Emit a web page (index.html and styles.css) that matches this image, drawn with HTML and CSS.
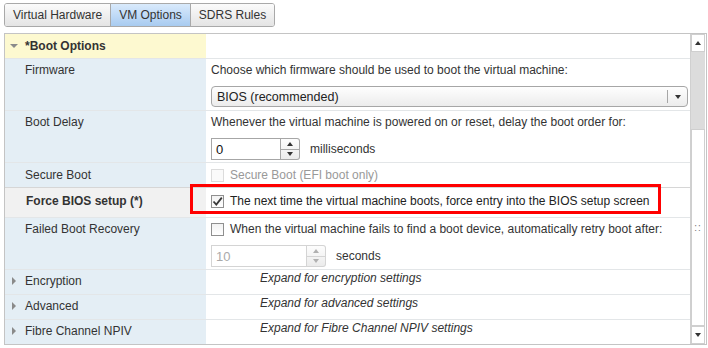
FILE: index.html
```html
<!DOCTYPE html>
<html lang="en">
<head>
<meta charset="UTF-8">
<title>VM Options</title>
<link rel="stylesheet" href="styles.css">
</head>
<body>
    <div class="tabs">
        <span class="tab">Virtual Hardware</span>
        <span class="tab active">VM Options</span>
        <span class="tab">SDRS Rules</span>
    </div>

    <div class="panel">
        <div class="rows">
            <div class="row head">
                <div class="label"><span class="arrow down"></span>*Boot Options</div>
                <div class="value"></div>
            </div>

            <div class="row tall">
                <div class="label">Firmware</div>
                <div class="value">
                    <div>Choose which firmware should be used to boot the virtual machine:</div>
                    <div class="select">
                        <span>BIOS (recommended)</span>
                        <span class="select-btn"><span class="tri-down"></span></span>
                    </div>
                </div>
            </div>

            <div class="row tall">
                <div class="label">Boot Delay</div>
                <div class="value">
                    <div>Whenever the virtual machine is powered on or reset, delay the boot order for:</div>
                    <div class="line">
                        <div class="spinner">
                            <span class="spin-input">0</span>
                            <span class="spin-btns">
                                <span class="spin-btn"><span class="tri-up"></span></span>
                                <span class="spin-btn"><span class="tri-down"></span></span>
                            </span>
                        </div>
                        <span class="unit">milliseconds</span>
                    </div>
                </div>
            </div>

            <div class="row before-force">
                <div class="label">Secure Boot</div>
                <div class="value muted">
                    <div class="line"><span class="check disabled"></span>Secure Boot (EFI boot only)</div>
                </div>
            </div>

            <div class="row force">
                <div class="label">Force BIOS setup (*)</div>
                <div class="value dark">
                    <div class="line">
                        <span class="check">
                            <svg width="11" height="11" viewBox="0 0 11 11"><path d="M1.5 5.5 L4.3 8.6 L9.8 1.6" fill="none" stroke="#3a3a3a" stroke-width="1.8"/></svg>
                        </span>The next time the virtual machine boots, force entry into the BIOS setup screen
                    </div>
                </div>
                <div class="highlight"></div>
            </div>

            <div class="row tall">
                <div class="label">Failed Boot Recovery</div>
                <div class="value">
                    <div class="line"><span class="check"></span>When the virtual machine fails to find a boot device, automatically retry boot after:</div>
                    <div class="line">
                        <div class="spinner off">
                            <span class="spin-input wide">10</span>
                            <span class="spin-btns">
                                <span class="spin-btn"><span class="tri-up"></span></span>
                                <span class="spin-btn"><span class="tri-down"></span></span>
                            </span>
                        </div>
                        <span class="unit">seconds</span>
                    </div>
                </div>
            </div>

            <div class="row sub">
                <div class="label"><span class="arrow right"></span>Encryption</div>
                <div class="value hint">Expand for encryption settings</div>
            </div>
            <div class="row sub">
                <div class="label"><span class="arrow right"></span>Advanced</div>
                <div class="value hint">Expand for advanced settings</div>
            </div>
            <div class="row sub last">
                <div class="label"><span class="arrow right"></span>Fibre Channel NPIV</div>
                <div class="value hint">Expand for Fibre Channel NPIV settings</div>
            </div>
        </div>

        <div class="scrollbar">
            <span class="sb-btn"><span class="tri-up"></span></span>
            <span class="sb-track"></span>
            <span class="sb-thumb"><span class="grip">::</span></span>
            <span class="sb-btn"><span class="tri-down"></span></span>
        </div>
    </div>
</body>
</html>
```

FILE: styles.css
```css
body {
    margin: 0;
    padding: 3px 1px 0 4px;
    font-family: "Liberation Sans", Arial, sans-serif;
    font-size: 12px;
    color: #333;
}

/* tab strip */
.tabs {
    display: inline-flex;
    border: 1px solid #a9a9a9;
    border-radius: 3px;
    overflow: hidden;
}

.tab {
    height: 22px;
    line-height: 22px;
    padding: 0 8px 0 8px;
    background: linear-gradient(#fbfbfb, #e4e4e4);
    border-left: 1px solid #a9a9a9;
    color: #333;
}

.tab:first-child {
    border-left: none;
}

.tab.active {
    background: linear-gradient(#d9eafc, #a8cbf0);
}

/* main panel */
.panel {
    display: flex;
    margin-top: 6px;
    height: 310px;
    border: 1px solid #c4c4c4;
}

.rows {
    flex: 1;
    overflow: hidden;
}

.row {
    position: relative;
    display: grid;
    grid-template-columns: 201px 1fr;
    border-bottom: 1px solid #e3e6e8;
    min-height: 24px;
}

.row.last {
    border-bottom: none;
}

.label {
    background: #e4eef5;
    padding: 4px 0 0 20px;
    line-height: 16px;
}

.value {
    padding: 4px 5px 2px;
    line-height: 16px;
    display: flex;
    flex-direction: column;
    gap: 9px;
}

.row.tall {
    height: 51px;
}

.row.tall .value {
    padding-top: 3px;
    gap: 8px;
}

.row.tall .label {
    padding-top: 3px;
}

.head .label {
    background: #fdf9d0;
    font-weight: bold;
}

.before-force {
    border-bottom-color: #d6d6d6;
}

.force {
    min-height: 29px;
}

.force .label {
    background: #f1f1f1;
    font-weight: bold;
    padding: 5px 0 0 21px;
}

.force .value {
    padding-top: 5px;
}

.highlight {
    position: absolute;
    left: 185px;
    top: -4px;
    width: 465px;
    height: 24px;
    border: 3px solid #f00;
}

.line {
    display: flex;
    align-items: center;
}

.muted {
    color: #999;
}

.dark {
    color: #222;
}

.hint {
    font-style: italic;
    padding: 0 0 0 54px;
}

.sub .label {
    padding-top: 3px;
}

/* expand arrows */
.arrow {
    display: inline-block;
    width: 0;
    height: 0;
    vertical-align: middle;
}

.arrow.down {
    border-left: 4px solid transparent;
    border-right: 4px solid transparent;
    border-top: 4px solid #8a8a8a;
    margin: 0 7px 2px -15px;
}

.arrow.right {
    border-top: 4px solid transparent;
    border-bottom: 4px solid transparent;
    border-left: 4px solid #8a8a8a;
    margin: 0 9px 2px -13px;
}

/* dropdown */
.select {
    display: flex;
    align-items: center;
    justify-content: space-between;
    height: 19px;
    width: 470px;
    border: 1px solid #a6a6a6;
    border-radius: 4px;
    background: linear-gradient(#fefefe, #ececec);
    color: #222;
    padding-left: 5px;
    font-size: 12.5px;
}

.select-btn {
    display: flex;
    align-items: center;
    justify-content: center;
    width: 19px;
    height: 13px;
    border-left: 1px solid #a6a6a6;
}

.tri-down, .tri-up {
    display: inline-block;
    width: 0;
    height: 0;
    border-left: 3px solid transparent;
    border-right: 3px solid transparent;
}

.tri-down {
    border-top: 4px solid #333;
}

.tri-up {
    border-bottom: 4px solid #333;
}

/* number spinner */
.spinner {
    display: flex;
    height: 22px;
}

.spin-input {
    width: 64px;
    border: 1px solid #a6a6a6;
    background: #fff;
    color: #111;
    padding: 3px 0 0 4px;
    font-size: 13px;
}

.spin-input.wide {
    width: 90px;
}

.spin-btns {
    display: flex;
    flex-direction: column;
    width: 18px;
    border: 1px solid #a6a6a6;
    border-left: none;
    border-radius: 0 3px 3px 0;
    background: linear-gradient(#fdfdfd, #ebebeb);
}

.spin-btn {
    flex: 1;
    display: flex;
    align-items: center;
    justify-content: center;
}

.spin-btn + .spin-btn {
    border-top: 1px solid #a6a6a6;
}

.spinner.off .spin-input {
    color: #aaa;
    border-color: #d4d4d4;
}

.spinner.off .spin-btns {
    border-color: #d4d4d4;
}

.spinner.off .spin-btn + .spin-btn {
    border-top-color: #d4d4d4;
}

.spinner.off .tri-up {
    border-bottom-color: #b0b0b0;
}

.spinner.off .tri-down {
    border-top-color: #b0b0b0;
}

.unit {
    margin-left: 10px;
}

/* checkboxes */
.check {
    display: inline-flex;
    align-items: center;
    justify-content: center;
    width: 11px;
    height: 11px;
    border: 1px solid #8f8f8f;
    background: linear-gradient(#f2f2f2, #fff);
    margin-right: 6px;
}

.check.disabled {
    border-color: #dcdcdc;
    background: #fafafa;
}

/* scrollbar */
.scrollbar {
    display: flex;
    flex-direction: column;
    width: 14px;
    border-left: 1px solid #d0d0d0;
    margin-right: 1px;
}

.sb-btn {
    display: flex;
    align-items: center;
    justify-content: center;
    height: 16px;
    border: 1px solid #cfcfcf;
    background: #fff;
}

.sb-track {
    height: 77px;
    background: #dcdcdc;
}

.sb-thumb {
    flex: 1;
    display: flex;
    align-items: center;
    justify-content: center;
    border: 1px solid #cfcfcf;
    background: #fff;
}

.grip {
    color: #777;
    font-size: 10px;
    letter-spacing: 1px;
}
```
